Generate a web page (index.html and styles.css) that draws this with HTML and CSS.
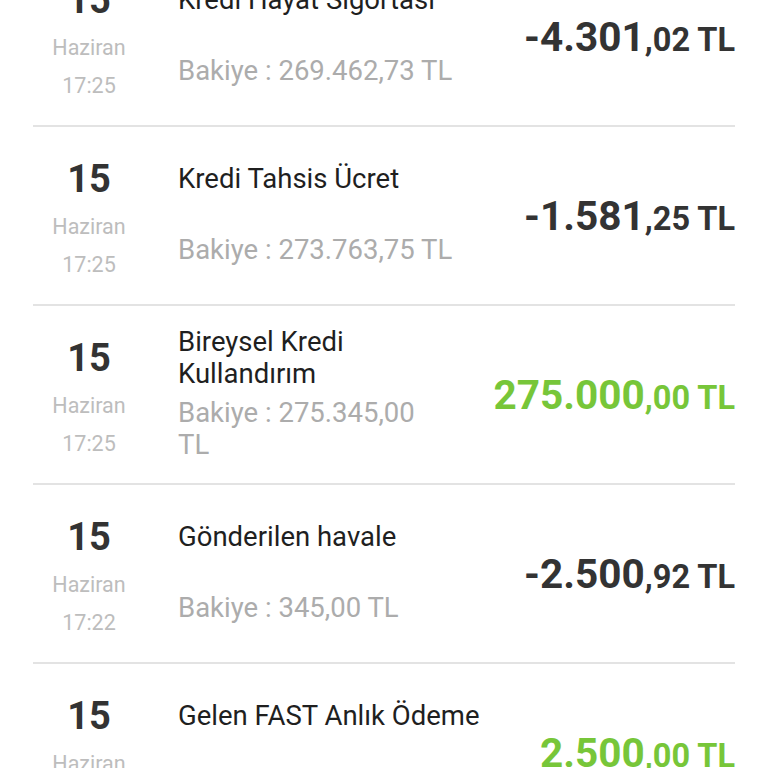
FILE: index.html
```html
<!DOCTYPE html>
<html lang="tr">
<head>
    <meta charset="UTF-8">
    <title>Hesap Hareketleri</title>
    <link rel="stylesheet" href="styles.css">
</head>
<body>
    <div class="list">
        <div class="row">
            <div class="date">
                <div class="day">15</div>
                <div class="month">Haziran</div>
                <div class="time">17:25</div>
            </div>
            <div class="info">
                <div class="title">Kredi Hayat Sigortası</div>
                <div class="balance">Bakiye : 269.462,73 TL</div>
            </div>
            <div class="amount">-4.301<span class="dec">,02 TL</span></div>
        </div>

        <div class="row">
            <div class="date">
                <div class="day">15</div>
                <div class="month">Haziran</div>
                <div class="time">17:25</div>
            </div>
            <div class="info">
                <div class="title">Kredi Tahsis Ücret</div>
                <div class="balance">Bakiye : 273.763,75 TL</div>
            </div>
            <div class="amount">-1.581<span class="dec">,25 TL</span></div>
        </div>

        <div class="row">
            <div class="date">
                <div class="day">15</div>
                <div class="month">Haziran</div>
                <div class="time">17:25</div>
            </div>
            <div class="info">
                <div class="title">Bireysel Kredi Kullandırım</div>
                <div class="balance">Bakiye : 275.345,00 TL</div>
            </div>
            <div class="amount in">275.000<span class="dec">,00 TL</span></div>
        </div>

        <div class="row">
            <div class="date">
                <div class="day">15</div>
                <div class="month">Haziran</div>
                <div class="time">17:22</div>
            </div>
            <div class="info">
                <div class="title">Gönderilen havale</div>
                <div class="balance">Bakiye : 345,00 TL</div>
            </div>
            <div class="amount">-2.500<span class="dec">,92 TL</span></div>
        </div>

        <div class="row">
            <div class="date">
                <div class="day">15</div>
                <div class="month">Haziran</div>
                <div class="time">17:20</div>
            </div>
            <div class="info">
                <div class="title">Gelen FAST Anlık Ödeme</div>
                <div class="balance">Bakiye : 2.845,92 TL</div>
            </div>
            <div class="amount in">2.500<span class="dec">,00 TL</span></div>
        </div>
    </div>
</body>
</html>
```

FILE: styles.css
```css
html, body { margin: 0; height: 768px; overflow: hidden; background: #fff; }
body { font-family: Roboto, "Noto Sans", sans-serif; }

.list { margin-top: -52px; }
.row {
    display: flex; align-items: center;
    height: 177px; margin: 0 33px;
    border-bottom: 2px solid #e3e3e3;
}

.date { width: 112px; text-align: center; padding-top: 4px; flex-shrink: 0; }
.day { font-size: 38px; font-weight: 700; line-height: 56px; color: #333; }
.month, .time { font-size: 21.5px; line-height: 38px; color: #bdbdbd; }
.month { margin-top: 1px; }

.info {
    flex: 1; margin-left: 33px; padding-right: 50px; padding-bottom: 3px;
    display: flex; flex-direction: column; gap: 7px;
}
.title, .balance {
    min-height: 64px; display: flex; align-items: center;
    font-size: 27.5px; line-height: 32px;
}
.title { color: #1f1f1f; }
.balance { color: #acacac; }

.amount {
    white-space: nowrap; font-size: 40.5px; font-weight: 700; color: #333;
}
.amount .dec { font-size: 32.5px; }
.amount.in { color: #77c639; }
```
